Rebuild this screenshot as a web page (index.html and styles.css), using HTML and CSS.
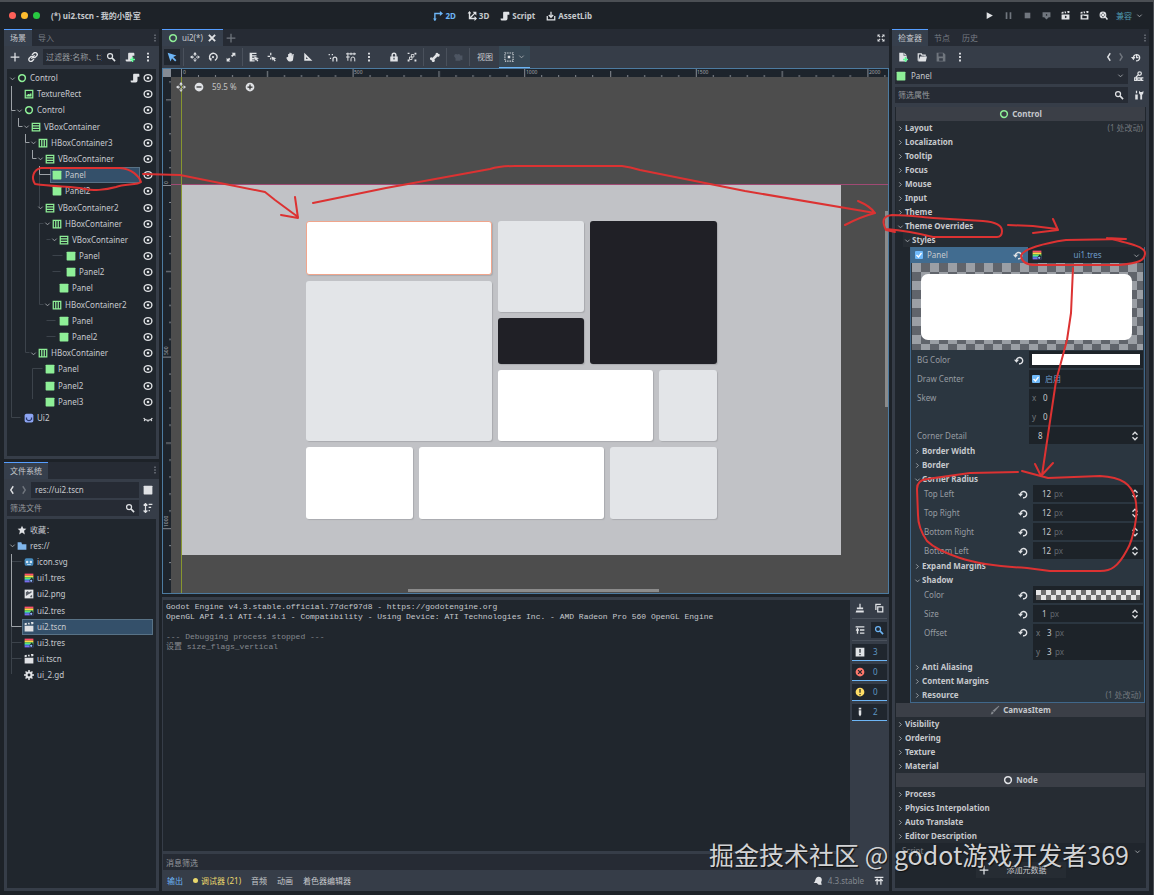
FILE: index.html
```html
<!DOCTYPE html>
<html lang="zh">
<head>
  <meta charset="UTF-8">
  <meta name="viewport" content="width=device-width, initial-scale=1.0">
  <title>(*) ui2.tscn - 我的小卧室</title>
  <link rel="stylesheet" href="styles.css">
</head>
<body>
  <!-- Icon set, 16x16 grid -->
  <svg class="sprite" aria-hidden="true">
    <symbol id="ring" viewBox="0 0 16 16"><circle cx="8" cy="8" r="5.4" fill="none" stroke="currentColor" stroke-width="2.4"/></symbol>
    <symbol id="panel" viewBox="0 0 16 16"><rect x="1" y="1" width="14" height="14" rx="1" fill="currentColor"/></symbol>
    <symbol id="vbox" viewBox="0 0 16 16"><path d="M2 2h12v12H2zM2 6h12M2 10h12" fill="none" stroke="currentColor" stroke-width="2"/></symbol>
    <symbol id="hbox" viewBox="0 0 16 16"><path d="M2 2h12v12H2zM6 2v12M10 2v12" fill="none" stroke="currentColor" stroke-width="2"/></symbol>
    <symbol id="texrect" viewBox="0 0 16 16"><path d="M2 2h12v12H2z" fill="none" stroke="currentColor" stroke-width="2"/><path d="M4 12V9h2V8h2v1l2-2h2v5z" fill="currentColor"/></symbol>
    <symbol id="eye" viewBox="0 0 16 16"><ellipse cx="8" cy="8" rx="6.2" ry="5.4" fill="none" stroke="currentColor" stroke-width="2.2"/><circle cx="8" cy="8" r="2.1" fill="currentColor"/></symbol>
    <symbol id="eye-off" viewBox="0 0 16 16"><path d="M1 8c3 5 11 5 14 0M3 10l-1 3M8 12v2M13 10l1 3" fill="none" stroke="currentColor" stroke-width="1.8"/></symbol>
    <symbol id="script" viewBox="0 0 16 16"><path d="M6 1h8a2 2 0 0 1 1 2v3h-3v6a3 3 0 0 1-3 3H3a2 2 0 0 1-2-2v-1h4V3a2 2 0 0 1 1-2z" fill="currentColor"/></symbol>
    <symbol id="down" viewBox="0 0 16 16"><path d="M3 6l5 5 5-5" fill="none" stroke="currentColor" stroke-width="2"/></symbol>
    <symbol id="right" viewBox="0 0 16 16"><path d="M5 3l5 5-5 5" fill="none" stroke="currentColor" stroke-width="2"/></symbol>
    <symbol id="left" viewBox="0 0 16 16"><path d="M10 2L6 8l4 6" fill="none" stroke="currentColor" stroke-width="2.2"/></symbol>
    <symbol id="next" viewBox="0 0 16 16"><path d="M6 2l4 6-4 6" fill="none" stroke="currentColor" stroke-width="2.2"/></symbol>
    <symbol id="dots" viewBox="0 0 16 16"><path d="M6.5 1h3v3h-3zM6.5 6.5h3v3h-3zM6.5 12h3v3h-3z" fill="currentColor"/></symbol>
    <symbol id="plus" viewBox="0 0 16 16"><path d="M8 1v14M1 8h14" stroke="currentColor" stroke-width="2"/></symbol>
    <symbol id="close" viewBox="0 0 16 16"><path d="M3 3l10 10M13 3L3 13" stroke="currentColor" stroke-width="3"/></symbol>
    <symbol id="link" viewBox="0 0 16 16"><g fill="none" stroke="currentColor" stroke-width="2.2" stroke-linecap="round"><path d="M7 4l2-2a3 3 0 0 1 5 4l-3 3H9M9 12l-2 2a3 3 0 0 1-5-4l3-3h2M6 10l4-4"/></g></symbol>
    <symbol id="search" viewBox="0 0 16 16"><circle cx="6.5" cy="6.5" r="4" fill="none" stroke="currentColor" stroke-width="2"/><path d="M9.5 9.5l5 5" stroke="currentColor" stroke-width="2.6"/></symbol>
    <symbol id="script-add" viewBox="0 0 16 16"><path d="M6 1h8a2 2 0 0 1 1 2v3h-3v6a3 3 0 0 1-3 3H3a2 2 0 0 1-2-2v-1h4V3a2 2 0 0 1 1-2z" fill="currentColor"/><path d="M12 8v8M8 12h8" stroke="#5fff97" stroke-width="2.4"/></symbol>
    <symbol id="select" viewBox="0 0 16 16"><path d="M1 1l4.5 14 2.5-5 5 5 2-2-5-5 5-2.5z" fill="currentColor"/></symbol>
    <symbol id="move" viewBox="0 0 16 16"><path d="M8 0l3 4H5zM8 16l3-4H5zM0 8l4-3v6zM16 8l-4-3v6zM7 3h2v3H7zM7 10h2v3H7zM3 7h3v2H3zM10 7h3v2h-3z" fill="currentColor"/></symbol>
    <symbol id="rotate" viewBox="0 0 16 16"><path d="M4 12a6 6 0 1 1 7 1.5" fill="none" stroke="currentColor" stroke-width="2.2"/><circle cx="8" cy="8" r="1.8" fill="currentColor"/><path d="M1 10l5 0-1 5z" fill="currentColor"/></symbol>
    <symbol id="scale" viewBox="0 0 16 16"><path d="M9 1h6v6l-2-2-3 3-2-2 3-3zM1 9v6h6l-2-2 2-2-2-2-2 2z" fill="currentColor"/></symbol>
    <symbol id="listsel" viewBox="0 0 16 16"><path d="M1 1h11v2H5v2h7v2H5v2h4v3H5v1h4v2H1z" fill="currentColor"/><path d="M8 7l8 3-3 1 2 3-2 1-2-3-1 2z" fill="currentColor"/></symbol>
    <symbol id="pivot" viewBox="0 0 16 16"><path d="M6 1v4M6 9v3M1 7h4" stroke="currentColor" stroke-width="2"/><path d="M7 7l8 3-3 1 2 3-2 1-2-3-1 2z" fill="currentColor"/></symbol>
    <symbol id="hand" viewBox="0 0 16 16"><path d="M5 8V3h2v4V1h2v6V2h2v5l1-4h2l-1 8c0 3-2 4-4 4H7c-2 0-3-2-5-6l2-1z" fill="currentColor"/></symbol>
    <symbol id="ruler" viewBox="0 0 16 16"><path d="M2 1l13 13H2zM5 8v3h3z" fill="currentColor" fill-rule="evenodd"/></symbol>
    <symbol id="snap" viewBox="0 0 16 16"><path d="M8 15v-4a3 3 0 0 1 6 0v4" fill="none" stroke="currentColor" stroke-width="2"/><path d="M1 3h2v2H1zM6 3h2v2H6zM3 9h2v2H3z" fill="currentColor"/></symbol>
    <symbol id="gridsnap" viewBox="0 0 16 16"><path d="M8 15v-4a3 3 0 0 1 6 0v4M3 1v13M8 1v4M13 1v4M0 3h16M0 8h6" fill="none" stroke="currentColor" stroke-width="1.6"/></symbol>
    <symbol id="lock" viewBox="0 0 16 16"><path d="M5 8V5a3 3 0 0 1 6 0v3" fill="none" stroke="currentColor" stroke-width="2.2"/><path d="M2 7h12v8H2zM7 9v3h2V9z" fill="currentColor" fill-rule="evenodd"/></symbol>
    <symbol id="group" viewBox="0 0 16 16"><path d="M1 1h3v2H1zM12 1h3v3h-3zM1 12h3v3H1zM12 12h3v3h-3z" fill="currentColor"/><path d="M7 4h4v4H7zM4 8h4v4H4z" fill="none" stroke="currentColor" stroke-width="1.4"/></symbol>
    <symbol id="bone" viewBox="0 0 16 16"><path d="M11 1a2 2 0 0 1 2 2 2.2 2.2 0 1 1-1 4L7 12a2.4 2.4 0 1 1-4 1 2.4 2.4 0 1 1 1-4l5-5a2.4 2.4 0 0 1 2-3z" fill="currentColor"/></symbol>
    <symbol id="camera" viewBox="0 0 16 16"><path d="M2 7a3 3 0 0 1 5-3 3 3 0 0 1 5 2l3-1v8l-3-1v2H4v-4z" fill="currentColor"/></symbol>
    <symbol id="anchor" viewBox="0 0 16 16"><path d="M1.5 1.5h13v13h-13z" fill="none" stroke="currentColor" stroke-width="1.8" stroke-dasharray="2 1.7"/><path d="M6 6h4v4H6z" fill="currentColor"/></symbol>
    <symbol id="m2d" viewBox="0 0 16 16"><path d="M3 15V4h9" fill="none" stroke="currentColor" stroke-width="2.2"/><path d="M11 0l5 4-5 4zM0 12h6l-3 4z" fill="currentColor"/></symbol>
    <symbol id="m3d" viewBox="0 0 16 16"><path d="M4 2v10h10M4 12l9-9" fill="none" stroke="currentColor" stroke-width="2.2"/><path d="M1 4l3-4 3 4zM12 8l4 4-4 4zM9 1h6v6z" fill="currentColor"/></symbol>
    <symbol id="asset" viewBox="0 0 16 16"><path d="M2 8v6h12V8M8 1v8M4.5 6.5L8 10l3.5-3.5" fill="none" stroke="currentColor" stroke-width="2"/></symbol>
    <symbol id="play" viewBox="0 0 16 16"><path d="M3 2l11 6-11 6z" fill="currentColor"/></symbol>
    <symbol id="pause" viewBox="0 0 16 16"><path d="M3 2h3v12H3zM10 2h3v12h-3z" fill="currentColor"/></symbol>
    <symbol id="stop" viewBox="0 0 16 16"><path d="M3 3h10v10H3z" fill="currentColor"/></symbol>
    <symbol id="remote" viewBox="0 0 16 16"><path d="M1 2h14v9h-3l-4 4-4-4H1zM7 5v4l3-2z" fill="currentColor" fill-rule="evenodd"/></symbol>
    <symbol id="clap" viewBox="0 0 16 16"><path d="M1 6h14v9H1zM7 8v5l4-2.5zM1 2l3-1 1 3-4 1zM6 1h3v3H7zM11 0h4v3l-3 1z" fill="currentColor" fill-rule="evenodd"/></symbol>
    <symbol id="clap-file" viewBox="0 0 16 16"><path d="M1 6h14v9H1zM4 8v5h8V9H8L7 8zM1 2l3-1 1 3-4 1zM6 1h3v3H7zM11 0h4v3l-3 1z" fill="currentColor" fill-rule="evenodd"/></symbol>
    <symbol id="scene" viewBox="0 0 16 16"><path d="M1 6h14v9H1zM1 2l3-1 1 3-4 1zM6 1h3v3H7zM11 0h4v3l-3 1z" fill="currentColor"/></symbol>
    <symbol id="movie" viewBox="0 0 16 16"><circle cx="7" cy="7" r="6" fill="currentColor"/><path d="M7 3v2M3 7h2M9 7h2M7 9v2" stroke="#1d2228" stroke-width="2"/><path d="M10 9l5 6" stroke="currentColor" stroke-width="2.5"/></symbol>
    <symbol id="expand" viewBox="0 0 16 16"><path d="M1 1h5L4.5 3 7 5.500 5.500 7 3 4.500 1 6zM15 1v5l-2-1.500L10.500 7 9 5.500 11.500 3 10 1zM1 15v-5l2 1.500L5.500 9 7 10.500 4.500 13 6 15zM15 15h-5l1.500-2L9 10.500 10.500 9l2.500 2.500 2-1.500z" fill="currentColor"/></symbol>
    <symbol id="newfile" viewBox="0 0 16 16"><path d="M2 1h7v5h5v9H2zM10 1l4 4h-4z" fill="currentColor"/><path d="M12 8v8M8 12h8" stroke="#5fff97" stroke-width="2.2"/></symbol>
    <symbol id="open" viewBox="0 0 16 16"><path d="M2 14V3h5l1 2h5v2" fill="none" stroke="currentColor" stroke-width="2"/><path d="M5 7h11l-2 8H2z" fill="currentColor"/></symbol>
    <symbol id="save" viewBox="0 0 16 16"><path d="M1 1h11l3 3v11H1zM4 2v5h7V2zM5 10v4h6v-4z" fill="currentColor" fill-rule="evenodd"/></symbol>
    <symbol id="history" viewBox="0 0 16 16"><path d="M4 10a5 5 0 1 1 4 4M9 5v4h3" fill="none" stroke="currentColor" stroke-width="2"/><path d="M0 8h7l-3 5z" fill="currentColor"/></symbol>
    <symbol id="doc" viewBox="0 0 16 16"><circle cx="9" cy="4" r="2.8" fill="none" stroke="currentColor" stroke-width="2"/><path d="M7 6L3 10M1 11h3v4H1zM6 11h4v4H6zM15 11h-3v4h3" fill="none" stroke="currentColor" stroke-width="1.8"/></symbol>
    <symbol id="tools" viewBox="0 0 16 16"><path d="M2 7h4v8H2zM3 1h2v4H3zM8 1l2 2h3l2-2v4l-2 3v7h-3V8L8 5z" fill="currentColor"/></symbol>
    <symbol id="revert" viewBox="0 0 16 16"><path d="M4 10a5 5 0 1 1 4 4" fill="none" stroke="currentColor" stroke-width="2.2"/><path d="M0 7.5h8l-4 5z" fill="currentColor"/></symbol>
    <symbol id="updown" viewBox="0 0 16 16"><path d="M4 6l4-4 4 4M4 10l4 4 4-4" fill="none" stroke="currentColor" stroke-width="2"/></symbol>
    <symbol id="style" viewBox="0 0 16 16"><path d="M1 1h14v3H1z" fill="#ff4f6a"/><path d="M1 4h14v3H1z" fill="#ffd84a"/><path d="M1 7h14v3H1z" fill="#5fe86e"/><path d="M1 10h14v2H1z" fill="#45c8f5"/><path d="M1 12h14v3H1z" fill="#7a6cf0"/><path d="M12 7l3 3v5H9v-4z" fill="#20262d"/><circle cx="11.500" cy="12.500" r="1.800" fill="#8db8ff"/></symbol>
    <symbol id="star" viewBox="0 0 16 16"><path d="M8 1l2 4.500 5 .5-3.700 3.300L12.500 15 8 12l-4.500 3 1.200-5.700L1 6l5-.5z" fill="currentColor"/></symbol>
    <symbol id="folder" viewBox="0 0 16 16"><path d="M1 2h6l1 3h7v9H1z" fill="#7fb5ea"/></symbol>
    <symbol id="godot" viewBox="0 0 16 16"><rect x="1" y="2" width="14" height="12" rx="3" fill="#478cbf"/><circle cx="5" cy="8" r="2" fill="#d8e6f2"/><circle cx="11" cy="8" r="2" fill="#d8e6f2"/><path d="M5 12h6" stroke="#fff"/></symbol>
    <symbol id="node2d" viewBox="0 0 16 16"><rect x="1" y="1" width="14" height="14" rx="3" fill="#8da5f3"/><path d="M4 7v3c2 3 6 3 8 0V7" fill="none" stroke="#28386e" stroke-width="2"/></symbol>
    <symbol id="image" viewBox="0 0 16 16"><path d="M1 1h14v14H1z" fill="#e4e6e9"/><path d="M3 5l3-2 2 2 4-2v3l-4 2-5 3zM10 11l3-2v4h-3z" fill="#5a5f68"/></symbol>
    <symbol id="gear" viewBox="0 0 16 16"><circle cx="8" cy="8" r="4" fill="none" stroke="currentColor" stroke-width="3.4"/><path d="M8 0v4M8 12v4M0 8h4M12 8h4M2.500 2.500l3 3M10.500 10.500l3 3M13.500 2.500l-3 3M5.500 10.500l-3 3" stroke="currentColor" stroke-width="2.4"/></symbol>
    <symbol id="sort" viewBox="0 0 16 16"><path d="M4 2v12M1 4l3-3 3 3M1 12l3 3 3-3M9 2h6M9 7h4M9 12h2" fill="none" stroke="currentColor" stroke-width="2"/></symbol>
    <symbol id="brush" viewBox="0 0 16 16"><path d="M14 1l1 1-8 9-3-2zM3 10l3 2c-1 3-3 3-5 3z" fill="currentColor"/></symbol>
    <symbol id="clear" viewBox="0 0 16 16"><path d="M7 1h2v6h4v3H3V7h4zM2 12h12v3H1z" fill="currentColor"/></symbol>
    <symbol id="copy" viewBox="0 0 16 16"><path d="M6 6h8v8H6zM3 11V2h8" fill="none" stroke="currentColor" stroke-width="2"/></symbol>
    <symbol id="collapse" viewBox="0 0 16 16"><path d="M1 3h14M8 8h7M8 13h7M4 6v8M2 9l2-3 2 3" fill="none" stroke="currentColor" stroke-width="2.2"/></symbol>
    <symbol id="msg" viewBox="0 0 16 16"><path d="M1 1h14v14H1zM7 3v6h2V3zM7 11v2h2v-2z" fill="currentColor" fill-rule="evenodd"/></symbol>
    <symbol id="err" viewBox="0 0 16 16"><circle cx="8" cy="8" r="7" fill="#ff786b"/><path d="M5 5l6 6M11 5l-6 6" stroke="#20262d" stroke-width="2"/></symbol>
    <symbol id="warn" viewBox="0 0 16 16"><circle cx="8" cy="8" r="7" fill="#ffdd65"/><path d="M8 3v6M8 11v2" stroke="#20262d" stroke-width="2"/></symbol>
    <symbol id="info" viewBox="0 0 16 16"><path d="M6 1h4v3H6zM6 5h4v7l-2 3-2-3z" fill="currentColor"/></symbol>
    <symbol id="bell" viewBox="0 0 16 16"><path d="M5 3c4-4 10-1 9 4l-1 3 1 4H9l-3-3H1c3-2 2-5 4-8z" fill="currentColor"/></symbol>
    <symbol id="pin" viewBox="0 0 16 16"><path d="M1 2h14M5 14V6M11 14V6M2 8l3-3 3 3M8 8l3-3 3 3" fill="none" stroke="currentColor" stroke-width="2"/></symbol>
    <symbol id="minus-c" viewBox="0 0 16 16"><circle cx="8" cy="8" r="7" fill="currentColor"/><path d="M4 8h8" stroke="#333" stroke-width="2"/></symbol>
    <symbol id="plus-c" viewBox="0 0 16 16"><circle cx="8" cy="8" r="7" fill="currentColor"/><path d="M4 8h8M8 4v8" stroke="#333" stroke-width="2"/></symbol>
  </svg>

  <header class="titlebar">
    <div class="title">
      <span class="light red"></span><span class="light yellow"></span><span class="light green"></span>
      <strong>(*) ui2.tscn - 我的小卧室</strong>
    </div>
    <nav class="modes">
      <button class="mode on"><svg class="i"><use href="#m2d"/></svg>2D</button>
      <button class="mode"><svg class="i"><use href="#m3d"/></svg>3D</button>
      <button class="mode"><svg class="i"><use href="#script"/></svg>Script</button>
      <button class="mode"><svg class="i"><use href="#asset"/></svg>AssetLib</button>
    </nav>
    <div class="run">
      <button class="tool" aria-label="运行"><svg class="i"><use href="#play"/></svg></button>
      <button class="tool dim" aria-label="暂停"><svg class="i"><use href="#pause"/></svg></button>
      <button class="tool dim" aria-label="停止"><svg class="i"><use href="#stop"/></svg></button>
      <button class="tool dim" aria-label="远程调试"><svg class="i"><use href="#remote"/></svg></button>
      <button class="tool" aria-label="运行当前场景"><svg class="i"><use href="#clap"/></svg></button>
      <button class="tool" aria-label="运行指定场景"><svg class="i"><use href="#clap-file"/></svg></button>
      <button class="tool" aria-label="录制"><svg class="i"><use href="#movie"/></svg></button>
      <button class="renderer">兼容<svg class="arrow"><use href="#down"/></svg></button>
    </div>
  </header>

  <main class="editor">
    <!-- Left docks -->
    <div class="side">
      <section class="dock">
        <div class="tabs">
          <button class="tab on">场景</button><button class="tab">导入</button>
          <button class="more dim" aria-label="更多"><svg class="i"><use href="#dots"/></svg></button>
        </div>
        <div class="bar scene-bar">
          <button class="tool" aria-label="添加节点"><svg class="i"><use href="#plus"/></svg></button>
          <button class="tool" aria-label="实例化"><svg class="i"><use href="#link"/></svg></button>
          <label class="filter"><input type="text" placeholder="过滤器:名称、t:类型" aria-label="过滤器"><svg class="i"><use href="#search"/></svg></label>
          <button class="tool" aria-label="添加脚本"><svg class="i"><use href="#script-add"/></svg></button>
          <button class="tool" aria-label="更多选项"><svg class="i"><use href="#dots"/></svg></button>
        </div>
        <div class="well nodes-well">
          <ul class="tree nodes">
            <li class="d0"><svg class="arrow"><use href="#down"/></svg><svg class="i g"><use href="#ring"/></svg><span>Control</span><svg class="i"><use href="#script"/></svg><svg class="i eye"><use href="#eye"/></svg></li>
            <li class="d1 leaf"><svg class="i g"><use href="#texrect"/></svg><span>TextureRect</span><svg class="i eye"><use href="#eye"/></svg></li>
            <li class="d1"><svg class="arrow"><use href="#down"/></svg><svg class="i g"><use href="#ring"/></svg><span>Control</span><svg class="i eye"><use href="#eye"/></svg></li>
            <li class="d2"><svg class="arrow"><use href="#down"/></svg><svg class="i g"><use href="#vbox"/></svg><span>VBoxContainer</span><svg class="i eye"><use href="#eye"/></svg></li>
            <li class="d3"><svg class="arrow"><use href="#down"/></svg><svg class="i g"><use href="#hbox"/></svg><span>HBoxContainer3</span><svg class="i eye"><use href="#eye"/></svg></li>
            <li class="d4"><svg class="arrow"><use href="#down"/></svg><svg class="i g"><use href="#vbox"/></svg><span>VBoxContainer</span><svg class="i eye"><use href="#eye"/></svg></li>
            <li class="d5 leaf"><div class="picked"><svg class="i g"><use href="#panel"/></svg><span>Panel</span></div><svg class="i eye"><use href="#eye"/></svg></li>
            <li class="d5 leaf"><svg class="i g"><use href="#panel"/></svg><span>Panel2</span><svg class="i eye"><use href="#eye"/></svg></li>
            <li class="d4"><svg class="arrow"><use href="#down"/></svg><svg class="i g"><use href="#vbox"/></svg><span>VBoxContainer2</span><svg class="i eye"><use href="#eye"/></svg></li>
            <li class="d5"><svg class="arrow"><use href="#down"/></svg><svg class="i g"><use href="#hbox"/></svg><span>HBoxContainer</span><svg class="i eye"><use href="#eye"/></svg></li>
            <li class="d6"><svg class="arrow"><use href="#down"/></svg><svg class="i g"><use href="#vbox"/></svg><span>VBoxContainer</span><svg class="i eye"><use href="#eye"/></svg></li>
            <li class="d7 leaf"><svg class="i g"><use href="#panel"/></svg><span>Panel</span><svg class="i eye"><use href="#eye"/></svg></li>
            <li class="d7 leaf"><svg class="i g"><use href="#panel"/></svg><span>Panel2</span><svg class="i eye"><use href="#eye"/></svg></li>
            <li class="d6 leaf"><svg class="i g"><use href="#panel"/></svg><span>Panel</span><svg class="i eye"><use href="#eye"/></svg></li>
            <li class="d5"><svg class="arrow"><use href="#down"/></svg><svg class="i g"><use href="#hbox"/></svg><span>HBoxContainer2</span><svg class="i eye"><use href="#eye"/></svg></li>
            <li class="d6 leaf"><svg class="i g"><use href="#panel"/></svg><span>Panel</span><svg class="i eye"><use href="#eye"/></svg></li>
            <li class="d6 leaf"><svg class="i g"><use href="#panel"/></svg><span>Panel2</span><svg class="i eye"><use href="#eye"/></svg></li>
            <li class="d3"><svg class="arrow"><use href="#down"/></svg><svg class="i g"><use href="#hbox"/></svg><span>HBoxContainer</span><svg class="i eye"><use href="#eye"/></svg></li>
            <li class="d4 leaf"><svg class="i g"><use href="#panel"/></svg><span>Panel</span><svg class="i eye"><use href="#eye"/></svg></li>
            <li class="d4 leaf"><svg class="i g"><use href="#panel"/></svg><span>Panel2</span><svg class="i eye"><use href="#eye"/></svg></li>
            <li class="d4 leaf"><svg class="i g"><use href="#panel"/></svg><span>Panel3</span><svg class="i eye"><use href="#eye"/></svg></li>
            <li class="d1 leaf"><svg class="i"><use href="#node2d"/></svg><span>Ui2</span><svg class="i eye"><use href="#eye-off"/></svg></li>
          </ul>
          <!-- Relationship lines -->
          <svg class="guides">
            <path class="faint" d="M4.500 41v307.500h9M18.500 73v210.500h4M32.500 105v33M32.500 154.500h4M32.500 154v81.500h4M39.500 170.500h4M45.500 186.500h10M45.500 202.500h8M39.500 251.500h9M39.500 267.500h9M25.500 330v-30.500h10"/>
            <path d="M4.500 17v24.500h4M11.500 49v8.500h4M18.500 65v8.500h4M25.500 81v8.500h4M32.500 97v8.500h11"/>
          </svg>
        </div>
      </section>

      <section class="dock">
        <div class="tabs">
          <button class="tab on">文件系统</button>
          <button class="more dim" aria-label="更多"><svg class="i"><use href="#dots"/></svg></button>
        </div>
        <div class="bar path-bar">
          <button class="nav" aria-label="后退"><svg class="i"><use href="#left"/></svg></button>
          <button class="nav dim" aria-label="前进"><svg class="i"><use href="#next"/></svg></button>
          <label class="filter path"><input type="text" value="res://ui2.tscn" aria-label="路径"></label>
          <button class="tool" aria-label="切换布局"><svg class="i"><use href="#panel"/></svg></button>
        </div>
        <div class="bar file-bar">
          <label class="filter"><input type="text" placeholder="筛选文件" aria-label="筛选文件"><svg class="i"><use href="#search"/></svg></label>
          <button class="tool" aria-label="排序"><svg class="i"><use href="#sort"/></svg></button>
        </div>
        <div class="well files-well">
          <ul class="tree files">
            <li class="d0 leaf"><svg class="i"><use href="#star"/></svg><span>收藏：</span></li>
            <li class="d0"><svg class="arrow"><use href="#down"/></svg><svg class="i"><use href="#folder"/></svg><span>res://</span></li>
            <li class="d1 leaf"><svg class="i"><use href="#godot"/></svg><span>icon.svg</span></li>
            <li class="d1 leaf"><svg class="i"><use href="#style"/></svg><span>ui1.tres</span></li>
            <li class="d1 leaf"><svg class="i"><use href="#image"/></svg><span>ui2.png</span></li>
            <li class="d1 leaf"><svg class="i"><use href="#style"/></svg><span>ui2.tres</span></li>
            <li class="d1 leaf"><div class="picked"><svg class="i"><use href="#scene"/></svg><span>ui2.tscn</span></div></li>
            <li class="d1 leaf"><svg class="i"><use href="#style"/></svg><span>ui3.tres</span></li>
            <li class="d1 leaf"><svg class="i"><use href="#scene"/></svg><span>ui.tscn</span></li>
            <li class="d1 leaf"><svg class="i"><use href="#gear"/></svg><span>ui_2.gd</span></li>
          </ul>
          <svg class="guides">
            <path class="faint" d="M4.500 42.500h10M4.500 123.500h10M4.500 139.500h10M4.500 107v48"/>
            <path d="M4.500 35v72.500h10"/>
          </svg>
        </div>
      </section>
    </div>

    <!-- Canvas and output -->
    <div class="center">
      <div class="tabs">
        <button class="tab on scene-tab"><svg class="i g"><use href="#ring"/></svg>ui2(*)<svg class="i"><use href="#close"/></svg></button>
        <button class="tool dim" aria-label="新建场景"><svg class="i"><use href="#plus"/></svg></button>
        <button class="tool more" aria-label="专注模式"><svg class="i"><use href="#expand"/></svg></button>
      </div>
      <div class="toolbar">
        <button class="tool on" aria-label="选择"><svg class="i"><use href="#select"/></svg></button>
        <i class="sep"></i>
        <button class="tool" aria-label="移动"><svg class="i"><use href="#move"/></svg></button>
        <button class="tool" aria-label="旋转"><svg class="i"><use href="#rotate"/></svg></button>
        <button class="tool" aria-label="缩放"><svg class="i"><use href="#scale"/></svg></button>
        <i class="sep"></i>
        <button class="tool" aria-label="列表选择"><svg class="i"><use href="#listsel"/></svg></button>
        <button class="tool" aria-label="轴心"><svg class="i"><use href="#pivot"/></svg></button>
        <button class="tool" aria-label="平移"><svg class="i"><use href="#hand"/></svg></button>
        <button class="tool" aria-label="标尺"><svg class="i"><use href="#ruler"/></svg></button>
        <button class="tool apart" aria-label="智能吸附"><svg class="i"><use href="#snap"/></svg></button>
        <button class="tool" aria-label="栅格吸附"><svg class="i"><use href="#gridsnap"/></svg></button>
        <button class="tool" aria-label="吸附选项"><svg class="i"><use href="#dots"/></svg></button>
        <button class="tool apart" aria-label="锁定"><svg class="i"><use href="#lock"/></svg></button>
        <button class="tool" aria-label="编组"><svg class="i"><use href="#group"/></svg></button>
        <i class="sep"></i>
        <button class="tool" aria-label="骨骼"><svg class="i"><use href="#bone"/></svg></button>
        <i class="sep"></i>
        <button class="tool off" aria-label="摄像机"><svg class="i"><use href="#camera"/></svg></button>
        <i class="sep"></i>
        <button class="view">视图</button>
        <button class="anchors" aria-label="锚点"><svg class="i"><use href="#anchor"/></svg><svg class="arrow"><use href="#down"/></svg></button>
      </div>

      <div class="viewport">
        <div class="corner"></div>
        <svg class="ruler">
          <defs><pattern id="hticks" x="10" width="171.600" height="8" patternUnits="userSpaceOnUse">
            <path d="M.5 0v8M17.500 6v2M34.500 6v2M51.500 6v2M68.500 6v2M86.500 2v6M103.500 6v2M120.500 6v2M137.500 6v2M154.500 6v2" stroke="#868b92"/>
          </pattern></defs>
          <rect width="100%" height="8" fill="url(#hticks)"/>
          <text x="12" y="5">0</text><text x="183" y="5">500</text><text x="355" y="5">1000</text><text x="526" y="5">1500</text><text x="698" y="5">2000</text>
        </svg>
        <svg class="ruler">
          <defs><pattern id="vticks" y="108" width="8" height="171.600" patternUnits="userSpaceOnUse">
            <path d="M0 .5h8M6 17.500h2M6 34.500h2M6 51.500h2M6 68.500h2M3 86.500h5M6 103.500h2M6 120.500h2M6 137.500h2M6 154.500h2" stroke="#868b92"/>
          </pattern></defs>
          <rect width="8" height="100%" fill="url(#vticks)"/>
          <text transform="translate(5 107) rotate(-90)">0</text><text transform="translate(5 278) rotate(-90)">500</text><text transform="translate(5 450) rotate(-90)">1000</text>
        </svg>
        <div class="canvas">
          <div class="stage">
            <div class="row top">
              <div class="col wide">
                <div class="box white short selected"></div>
                <div class="box grow"></div>
              </div>
              <div class="col grow">
                <div class="row upper">
                  <div class="col narrow">
                    <div class="box double"></div>
                    <div class="box dark grow"></div>
                  </div>
                  <div class="box dark grow"></div>
                </div>
                <div class="row grow">
                  <div class="box white grow"></div>
                  <div class="box small"></div>
                </div>
              </div>
            </div>
            <div class="row bottom">
              <div class="box white third"></div>
              <div class="box white grow"></div>
              <div class="box third"></div>
            </div>
          </div>
          <i class="axis-x"></i><i class="axis-y"></i>
          <i class="scroll-x"></i><i class="scroll-y"></i>
          <div class="zoom">
            <button aria-label="居中"><svg class="i"><use href="#move"/></svg></button>
            <button aria-label="缩小"><svg class="i"><use href="#minus-c"/></svg></button>
            <span>59.5 %</span>
            <button aria-label="放大"><svg class="i"><use href="#plus-c"/></svg></button>
          </div>
        </div>
      </div>

      <section class="output">
        <div class="log-area">
          <div class="log-col">
            <pre class="log">Godot Engine v4.3.stable.official.77dcf97d8 - https://godotengine.org
OpenGL API 4.1 ATI-4.14.1 - Compatibility - Using Device: ATI Technologies Inc. - AMD Radeon Pro 560 OpenGL Engine

<span>--- Debugging process stopped ---
设置 size_flags_vertical</span></pre>
            <input class="log-filter" type="text" placeholder="消息筛选" aria-label="消息筛选">
          </div>
          <div class="log-tools">
            <div class="pair">
              <button class="tool" aria-label="清除"><svg class="i"><use href="#clear"/></svg></button>
              <button class="tool" aria-label="复制"><svg class="i"><use href="#copy"/></svg></button>
            </div>
            <div class="pair">
              <button class="tool" aria-label="折叠"><svg class="i"><use href="#collapse"/></svg></button>
              <button class="tool on" aria-label="搜索"><svg class="i"><use href="#search"/></svg></button>
            </div>
            <button class="count"><svg class="i"><use href="#msg"/></svg>3</button>
            <button class="count"><svg class="i"><use href="#err"/></svg>0</button>
            <button class="count"><svg class="i"><use href="#warn"/></svg>0</button>
            <button class="count"><svg class="i"><use href="#info"/></svg>2</button>
          </div>
        </div>
        <footer class="bottom-tabs">
          <button class="on">输出</button>
          <button class="alert"><i class="dot"></i>调试器 (21)</button>
          <button>音频</button>
          <button>动画</button>
          <button>着色器编辑器</button>
          <span class="version"><svg class="i"><use href="#bell"/></svg>4.3.stable</span>
          <button aria-label="固定"><svg class="i"><use href="#pin"/></svg></button>
        </footer>
      </section>
    </div>

    <!-- Inspector -->
    <section class="dock inspector">
      <div class="tabs">
        <button class="tab on">检查器</button><button class="tab">节点</button><button class="tab">历史</button>
        <button class="more dim" aria-label="更多"><svg class="i"><use href="#dots"/></svg></button>
      </div>
      <div class="bar res-bar">
        <button class="tool" aria-label="新建资源"><svg class="i"><use href="#newfile"/></svg></button>
        <button class="tool" aria-label="打开资源"><svg class="i"><use href="#open"/></svg></button>
        <button class="tool dim" aria-label="保存资源"><svg class="i"><use href="#save"/></svg></button>
        <button class="tool" aria-label="更多选项"><svg class="i"><use href="#dots"/></svg></button>
        <button class="nav push" aria-label="上一个"><svg class="i"><use href="#left"/></svg></button>
        <button class="nav dim" aria-label="下一个"><svg class="i"><use href="#next"/></svg></button>
        <button class="tool" aria-label="历史记录"><svg class="i"><use href="#history"/></svg></button>
      </div>
      <div class="bar">
        <button class="filter object"><svg class="i g"><use href="#panel"/></svg><span>Panel</span><svg class="arrow"><use href="#down"/></svg></button>
        <button class="tool" aria-label="文档"><svg class="i"><use href="#doc"/></svg></button>
      </div>
      <div class="bar">
        <label class="filter"><input type="text" placeholder="筛选属性" aria-label="筛选属性"><svg class="i"><use href="#search"/></svg></label>
        <button class="tool" aria-label="属性设置"><svg class="i"><use href="#tools"/></svg></button>
      </div>

      <div class="props">
        <h2 class="class-name"><svg class="i g"><use href="#ring"/></svg>Control</h2>
        <button class="group"><svg class="arrow"><use href="#right"/></svg>Layout<small>(1 处改动)</small></button>
        <button class="group"><svg class="arrow"><use href="#right"/></svg>Localization</button>
        <button class="group"><svg class="arrow"><use href="#right"/></svg>Tooltip</button>
        <button class="group"><svg class="arrow"><use href="#right"/></svg>Focus</button>
        <button class="group"><svg class="arrow"><use href="#right"/></svg>Mouse</button>
        <button class="group"><svg class="arrow"><use href="#right"/></svg>Input</button>
        <button class="group"><svg class="arrow"><use href="#right"/></svg>Theme</button>
        <button class="group"><svg class="arrow"><use href="#down"/></svg>Theme Overrides</button>
        <div class="styles">
          <button class="group"><svg class="arrow"><use href="#down"/></svg>Styles</button>
          <div class="resource">
            <div class="res-head">
              <label class="res-name"><input type="checkbox" checked>Panel</label>
              <svg class="i"><use href="#revert"/></svg>
              <button class="res-value"><svg class="i"><use href="#style"/></svg><span>ui1.tres</span><svg class="arrow"><use href="#down"/></svg></button>
            </div>
            <div class="preview"><div class="preview-box"></div></div>
            <div class="fields">
              <div class="prop"><label for="bg">BG Color</label><svg class="i"><use href="#revert"/></svg><button class="value swatch" id="bg"><i></i></button></div>
              <div class="prop"><label for="center">Draw Center</label><div class="value"><input type="checkbox" id="center" checked><label class="enabled" for="center">启用</label></div></div>
              <div class="prop tall"><label for="skx">Skew</label>
                <div class="vector">
                  <div class="value"><label class="axis" for="skx">x</label><input id="skx" type="text" value="0"></div>
                  <div class="value"><label class="axis" for="sky">y</label><input id="sky" type="text" value="0"></div>
                </div>
              </div>
              <div class="prop"><label for="detail">Corner Detail</label><div class="value num"><input id="detail" type="text" value="8"><svg class="i"><use href="#updown"/></svg></div></div>
            </div>
            <button class="group"><svg class="arrow"><use href="#right"/></svg>Border Width</button>
            <button class="group"><svg class="arrow"><use href="#right"/></svg>Border</button>
            <button class="group"><svg class="arrow"><use href="#down"/></svg>Corner Radius</button>
            <div class="fields nested">
              <div class="prop"><label for="tl">Top Left</label><svg class="i"><use href="#revert"/></svg><div class="value num"><input id="tl" type="text" value="12"><span>px</span><svg class="i"><use href="#updown"/></svg></div></div>
              <div class="prop"><label for="tr">Top Right</label><svg class="i"><use href="#revert"/></svg><div class="value num"><input id="tr" type="text" value="12"><span>px</span><svg class="i"><use href="#updown"/></svg></div></div>
              <div class="prop"><label for="br">Bottom Right</label><svg class="i"><use href="#revert"/></svg><div class="value num"><input id="br" type="text" value="12"><span>px</span><svg class="i"><use href="#updown"/></svg></div></div>
              <div class="prop"><label for="bl">Bottom Left</label><svg class="i"><use href="#revert"/></svg><div class="value num"><input id="bl" type="text" value="12"><span>px</span><svg class="i"><use href="#updown"/></svg></div></div>
            </div>
            <button class="group"><svg class="arrow"><use href="#right"/></svg>Expand Margins</button>
            <button class="group"><svg class="arrow"><use href="#down"/></svg>Shadow</button>
            <div class="fields nested">
              <div class="prop"><label for="shc">Color</label><svg class="i"><use href="#revert"/></svg><button class="value swatch checker" id="shc"><i></i></button></div>
              <div class="prop"><label for="shs">Size</label><svg class="i"><use href="#revert"/></svg><div class="value num"><input class="digit" id="shs" type="text" value="1"><span>px</span><svg class="i"><use href="#updown"/></svg></div></div>
              <div class="prop tall"><label for="ofx">Offset</label><svg class="i"><use href="#revert"/></svg>
                <div class="vector">
                  <div class="value"><label class="axis" for="ofx">x</label><input class="digit" id="ofx" type="text" value="3"><span>px</span></div>
                  <div class="value"><label class="axis" for="ofy">y</label><input class="digit" id="ofy" type="text" value="3"><span>px</span></div>
                </div>
              </div>
            </div>
            <button class="group"><svg class="arrow"><use href="#right"/></svg>Anti Aliasing</button>
            <button class="group"><svg class="arrow"><use href="#right"/></svg>Content Margins</button>
            <button class="group"><svg class="arrow"><use href="#right"/></svg>Resource<small>(1 处改动)</small></button>
          </div>
        </div>
        <h2 class="class-name"><svg class="i brush"><use href="#brush"/></svg>CanvasItem</h2>
        <button class="group"><svg class="arrow"><use href="#right"/></svg>Visibility</button>
        <button class="group"><svg class="arrow"><use href="#right"/></svg>Ordering</button>
        <button class="group"><svg class="arrow"><use href="#right"/></svg>Texture</button>
        <button class="group"><svg class="arrow"><use href="#right"/></svg>Material</button>
        <h2 class="class-name"><svg class="i"><use href="#ring"/></svg>Node</h2>
        <button class="group"><svg class="arrow"><use href="#right"/></svg>Process</button>
        <button class="group"><svg class="arrow"><use href="#right"/></svg>Physics Interpolation</button>
        <button class="group"><svg class="arrow"><use href="#right"/></svg>Auto Translate</button>
        <button class="group"><svg class="arrow"><use href="#right"/></svg>Editor Description</button>
        <div class="script-row"><span>Script</span><svg class="arrow"><use href="#down"/></svg></div>
        <button class="add-meta"><svg class="i"><use href="#plus"/></svg>添加元数据</button>
      </div>
    </section>
  </main>

  <!-- Hand-drawn notes -->
  <svg class="notes" viewBox="0 0 1154 895" preserveAspectRatio="xMinYMin">
    <path d="M35 184C31 178 33 170 41 168L120 168C132 169 139 176 141 182C138 185 125 184 116 187C105 190 92 191 85 189C75 186 55 187 35 184"/>
    <path d="M143 174L180 175L265 192L275 200L298 217M295 197L298 218L281 215"/>
    <path d="M313 203L386 188L490 169Q500 166 515 166L622 166Q630 167 640 170L745 191L875 213M858 201Q870 206 875 213Q860 217 845 225"/>
    <path d="M895 232L886 230C882 222 882 216 892 215C908 215 920 217 933 218L983 221C996 222 1002 226 1002 231Q1002 237 997 237L933 237Q910 231 886 229"/>
    <path d="M1008 225L1033 226L1057 229M1053 219L1058 230L1033 233"/>
    <path d="M1107 238L1126 239L1066 240C1045 243 1022 249 1021 256C1022 263 1028 265 1036 265L1120 265C1138 263 1145 261 1145 253C1145 247 1132 244 1107 238"/>
    <path d="M1073 268L1071 313L1067 340L1056 381L1042 475M1035 464L1041 476L1053 463"/>
    <path d="M1022 471L1048 478L1100 476C1123 477 1131 485 1135 497Q1138 510 1135 525Q1132 542 1127 550Q1120 563 1114 567Q1109 571 1100 571L1050 571L1027 568Q985 566 960 558Q936 550 927 541Q918 528 918 515L917 489Q917 480 927 479L970 473L1018 472"/>
  </svg>
  <div class="watermark">掘金技术社区 @ godot游戏开发者369</div>
</body>
</html>
```

FILE: styles.css
```css
* {
  box-sizing: border-box;
}

body {
  margin: 0;
  min-height: 100vh;
  display: flex;
  flex-direction: column;
  position: relative;
  padding: 0 4px 4px;
  background-color: #1d2228;
  border-top: 2px solid #4b4f54;
  border-right: 1px solid #4b4f54;
  color: #c6c9cd;
  font-family: "Noto Sans", "Noto Sans CJK SC", sans-serif;
  font-size: 8px;
  line-height: 12px;
}

button, input {
  font: inherit;
  color: inherit;
  background: none;
  border: 0;
  padding: 0;
  margin: 0;
  min-width: 0;
}

button {
  display: flex;
  align-items: center;
  cursor: pointer;
  white-space: nowrap;
}

ul, h2, pre {
  margin: 0;
  padding: 0;
  list-style: none;
}

/* Icons */
.sprite {
  position: absolute;
  width: 0;
  height: 0;
}

.i {
  width: 10px;
  height: 10px;
  flex: none;
  color: #e0e2e5;
}

.arrow {
  width: 7px;
  height: 7px;
  flex: none;
  color: #a5a9ae;
}

.i.g {
  color: #8eef97;
}

.dim .i {
  color: #70767e;
}

.tool.off .i {
  color: #4d5562;
}

.tool {
  width: 16px;
  height: 16px;
  justify-content: center;
  flex: none;
}

.tool.on {
  background-color: #20262e;
}

.tool.on .i {
  color: #6db5f5;
}

/* Title bar */
.titlebar {
  display: grid;
  grid-template-columns: 3fr 5fr;
  grid-template-rows: 27px;
  align-items: center;
  position: relative;
}

.title {
  display: flex;
  align-items: center;
  gap: 5px;
  padding-left: 5px;
}

.title strong {
  margin-left: 6px;
}

.light {
  width: 7px;
  height: 7px;
  border-radius: 50%;
}

.light.red { background-color: #ff6159; }
.light.yellow { background-color: #ffbd2e; }
.light.green { background-color: #28c941; }

.modes {
  display: flex;
  gap: 11px;
}

.mode {
  gap: 2px;
  font-weight: bold;
}

.mode.on, .mode.on .i {
  color: #6db5f5;
}

.run {
  position: absolute;
  right: 6px;
  display: flex;
  gap: 3px;
}

.run .i {
  width: 9px;
  height: 9px;
}

.renderer {
  color: #4f9bb0;
  gap: 4px;
  margin-left: 2px;
}

/* Main areas */
.editor {
  flex: 1;
  display: grid;
  grid-template-columns: 155px minmax(0, 1fr) 257px;
  gap: 3px;
}

.side {
  display: flex;
  flex-direction: column;
  gap: 3px;
}

.dock {
  flex: 1;
  display: flex;
  flex-direction: column;
  background-color: #363d48;
  padding: 0 3px 3px;
}

.tabs {
  display: flex;
  height: 17px;
  background-color: #262b34;
}

.dock > .tabs {
  margin: 0 -3px;
}

.tab {
  padding: 0 6px;
  color: #777c84;
  border-top: 1px solid transparent;
}

.tab.on {
  background-color: #363f4c;
  border-top-color: #569eff;
  color: #c6c9cd;
}

.more {
  margin-left: auto;
}

.more .i {
  width: 8px;
}

.bar {
  display: flex;
  align-items: center;
  gap: 1px;
  height: 19px;
}

.scene-bar {
  height: 22px;
  gap: 2px;
}

.res-bar {
  height: 20px;
  padding-top: 1px;
}

.filter {
  flex: 1;
  min-width: 0;
  height: 16px;
  display: flex;
  align-items: center;
  gap: 4px;
  padding: 0 4px 0 3px;
  background-color: #262b34;
}

.filter input {
  flex: 1;
  width: 10px;
}

.filter input::placeholder, .log-filter::placeholder {
  color: #969a9f;
}

.filter.path {
  padding-left: 4px;
}

.path-bar {
  padding-top: 2px;
  height: 20px;
}

.nav {
  width: 11px;
}

.well {
  flex: 1;
  position: relative;
  margin-top: 1px;
  background-color: #20262d;
}

/* Trees */
.tree {
  display: grid;
  grid-auto-rows: 1fr;
}

.tree.nodes {
  min-height: 356px;
}

.tree.files {
  min-height: 162px;
}

.nodes-well {
  padding-top: 1px;
}

.files-well {
  padding-top: 3px;
}

.tree li {
  display: flex;
  align-items: center;
  gap: 3px;
  padding: 0 3px 0 2px;
}

.tree li > span {
  flex: 1;
}

.tree .arrow {
  margin-right: -2px;
}

.tree .leaf::before {
  content: "";
  width: 5px;
}

.tree .d1 { padding-left: 9px; }
.tree .d2 { padding-left: 16px; }
.tree .d3 { padding-left: 23px; }
.tree .d4 { padding-left: 30px; }
.tree .d5 { padding-left: 37px; }
.tree .d6 { padding-left: 44px; }
.tree .d7 { padding-left: 51px; }

.picked {
  flex: 1;
  align-self: stretch;
  display: flex;
  align-items: center;
  gap: 3px;
  background-color: #34506a;
  border: 1px solid #587286;
  margin-left: -2px;
  padding-left: 1px;
}

.guides {
  position: absolute;
  left: 0;
  top: 0;
  width: 100%;
  height: 100%;
  fill: none;
  stroke: #9da2a7;
  pointer-events: none;
}

.guides .faint {
  stroke: #3c434b;
}

/* Canvas editor */
.center {
  display: flex;
  flex-direction: column;
  background-color: #1d2228;
}

.scene-tab {
  gap: 4px;
}

.center .tabs .tool {
  height: 17px;
}

.toolbar {
  display: flex;
  align-items: center;
  gap: 2px;
  height: 22px;
  padding-left: 2px;
  background-color: #363d48;
}

.sep {
  width: 1px;
  height: 18px;
  margin: 0 1px;
  background-color: #4a515c;
}

.apart {
  margin-left: 7px;
}

.view {
  padding: 0 4px;
}

.anchors {
  align-self: stretch;
  gap: 4px;
  padding: 0 5px;
  background-color: #374855;
  border-bottom: 1px solid #6db5f5;
}

.viewport {
  flex: 1;
  display: grid;
  grid-template-columns: 8px minmax(0, 1fr);
  grid-template-rows: 8px minmax(0, 1fr);
  border: 1px solid #4d7ba0;
  background-color: #1d242c;
}

.corner {
  background-color: #858b94;
}

.ruler {
  width: 100%;
  height: 100%;
}

.ruler text {
  font-size: 5px;
  fill: #a1a5aa;
}

.canvas {
  position: relative;
  overflow: hidden;
  background-color: #4d4d4d;
}

.stage {
  position: absolute;
  left: 11px;
  top: 108px;
  width: 659px;
  height: 370px;
  padding: 36px 124px;
  display: flex;
  flex-direction: column;
  gap: 6px;
  background-color: #c1c2c6;
}

.row {
  display: flex;
  gap: 6px;
}

.col {
  display: flex;
  flex-direction: column;
  gap: 6px;
}

.grow { flex: 1; }
.double { flex: 2; }
.top { height: 220px; }
.bottom { height: 72px; }
.wide { width: 186px; }
.short { height: 54px; }
.upper { height: 143px; }
.narrow { width: 86px; }
.small { width: 58px; }
.third { width: 107px; }

.box {
  border-radius: 3px;
  background-color: #e3e5e8;
  box-shadow: 1px 1px 1px #a9aaae;
}

.box.white { background-color: #fff; }
.box.dark { background-color: #202026; }

.box.selected {
  border: 1px solid #f0a58c;
}

.axis-x, .axis-y, .scroll-x, .scroll-y {
  position: absolute;
}

.axis-x {
  left: 0;
  right: 0;
  top: 107px;
  height: 1px;
  background-color: #a04a74;
}

.axis-y {
  left: 10px;
  top: 0;
  bottom: 0;
  width: 1px;
  background-color: #87962f;
}

.scroll-x {
  left: 33%;
  width: 35%;
  bottom: 1px;
  height: 3px;
  background-color: #8b8b8b;
}

.scroll-y {
  right: 0;
  top: 26%;
  height: 38%;
  width: 3px;
  background-color: #8b8b8b;
}

.zoom {
  position: absolute;
  left: 5px;
  top: 4px;
  display: flex;
  align-items: center;
  gap: 8px;
  color: #c4c4c4;
}

/* Output panel */
.output {
  margin-top: 3px;
  padding-top: 3px;
  display: flex;
  flex-direction: column;
  background-color: #363d48;
}

.log-area {
  display: flex;
}

.log-col {
  flex: 1;
  min-width: 0;
  padding-left: 1px;
}

.log {
  height: 251px;
  padding: 2px 3px;
  overflow: hidden;
  background-color: #20262d;
  font-family: "Liberation Mono", "Noto Sans CJK SC", monospace;
  line-height: 10px;
}

.log span {
  color: #85898e;
}

.log-filter {
  display: block;
  width: 100%;
  height: 16px;
  margin-top: 3px;
  padding: 0 3px;
  background-color: #262b34;
}

.log-tools {
  width: 39px;
  padding: 0 2px;
  display: flex;
  flex-direction: column;
  gap: 3px;
}

.pair {
  display: flex;
  justify-content: space-between;
  padding-bottom: 2px;
  border-bottom: 1px solid #4a515c;
}

.count {
  height: 17px;
  gap: 8px;
  padding-left: 3px;
  background-color: #20262e;
  border-bottom: 1px solid #6db5f5;
  color: #5f96c4;
}

.bottom-tabs {
  display: flex;
  align-items: center;
  gap: 10px;
  height: 21px;
  padding: 0 5px;
}

.bottom-tabs .on {
  color: #6db5f5;
}

.bottom-tabs .alert {
  color: #ead86c;
  gap: 3px;
}

.dot {
  width: 5px;
  height: 5px;
  border-radius: 50%;
  background-color: #ead86c;
}

.version {
  margin-left: auto;
  display: flex;
  align-items: center;
  gap: 5px;
  color: #83888f;
}

/* Inspector */
.res-bar .tool {
  margin-right: 2px;
}

.push {
  margin-left: auto;
}

.object {
  gap: 5px;
  padding-left: 1px;
}

.object span {
  flex: 1;
  text-align: left;
}

.inspector .bar:not(.res-bar) {
  gap: 3px;
  margin-right: -1px;
}

.props {
  flex: 1;
  margin-top: 3px;
  padding: 0 1px;
  background-color: #20262d;
}

.class-name {
  display: flex;
  align-items: center;
  justify-content: center;
  gap: 3px;
  height: 14px;
  font-size: 8px;
  background-color: #3b3f47;
}

.brush {
  color: #83878d;
}

.group {
  width: 100%;
  height: 14px;
  gap: 1px;
  padding: 0 2px 0 1px;
  background-color: #262c33;
  font-weight: bold;
}

.group small {
  margin-left: auto;
  font-size: 8px;
  font-weight: normal;
  color: #72777d;
}

.styles {
  padding-left: 7px;
}

.resource {
  margin-left: 7px;
  padding: 0 1px;
  border: 1px solid #40678a;
  border-top: 0;
  background-color: #2b3640;
}

.resource .group {
  background-color: transparent;
}

.resource > .group {
  padding-left: 2px;
}

.res-head {
  display: flex;
  align-items: center;
  height: 16px;
  margin: 0 -1px;
  background-color: #416c90;
}

.res-name {
  flex: 1;
  display: flex;
  align-items: center;
  gap: 4px;
  padding-left: 4px;
}

input[type="checkbox"] {
  appearance: none;
  width: 8px;
  height: 8px;
  border-radius: 1px;
  background: #70bafa url("data:image/svg+xml,%3Csvg xmlns='http://www.w3.org/2000/svg' viewBox='0 0 8 8'%3E%3Cpath d='M1.500 4l2 2 3-4' fill='none' stroke='white' stroke-width='1.300'/%3E%3C/svg%3E");
}

.res-value {
  width: 116px;
  height: 100%;
  padding: 0 4px;
  background-color: #20262d;
  color: #6f9cc9;
}

.res-value span {
  flex: 1;
}

.preview {
  height: 87px;
  padding: 11px 11px 10px 9px;
  background: repeating-conic-gradient(#60646b 0% 25%, #9b9fa5 0% 50%) 0 0 / 18px 18px;
}

.preview-box {
  height: 100%;
  border-radius: 7px;
  background-color: #fff;
}

.fields {
  display: grid;
  gap: 2px;
  padding-top: 1px;
}

.nested {
  margin-top: -1px;
  padding-top: 0;
}

.prop {
  display: flex;
  align-items: center;
  min-height: 17px;
  padding-left: 5px;
}

.nested .prop {
  padding-left: 12px;
}

.prop.tall {
  align-items: flex-start;
}

.prop > label {
  flex: 1;
  color: #979ca2;
}

.tall > label, .tall > .i {
  margin-top: 3px;
}

.prop > .i, .res-head > .i {
  margin-right: 5px;
}

.value, .vector {
  width: 114px;
}

.nested .value, .nested .vector {
  width: 110px;
}

.value {
  display: flex;
  align-items: center;
  height: 17px;
  padding: 0 3px;
  background-color: #1d2329;
}

.value input[type="text"] {
  width: 12px;
}

.value input[type="text"].digit {
  width: 8px;
}

.value.num {
  padding-left: 9px;
}

.value.num .i {
  margin-left: auto;
}

.value span {
  color: #62686f;
}

.vector {
  display: grid;
  gap: 2px;
  background-color: #1d2329;
}

.axis {
  width: 11px;
  color: #73787e;
}

.enabled {
  margin-left: 5px;
  color: #6f9cc9;
}

.swatch i {
  flex: 1;
  height: 11px;
  background-color: #fff;
}

.swatch.checker i {
  height: 10px;
  background: repeating-conic-gradient(#6e6e6e 0% 25%, #e6e6e6 0% 50%) 0 0 / 10px 10px;
}

.script-row {
  display: flex;
  align-items: center;
  justify-content: space-between;
  height: 16px;
  padding: 0 4px 0 6px;
  color: #777c82;
}

.add-meta {
  width: 90px;
  height: 16px;
  margin: 3px auto 0;
  padding-left: 3px;
  gap: 18px;
  background-color: #262c33;
}

/* Notes over the editor */
.notes {
  position: absolute;
  left: 0;
  top: -2px;
  width: 1154px;
  height: 895px;
  fill: none;
  stroke: #dc3232;
  stroke-width: 2;
  stroke-linecap: round;
  stroke-linejoin: round;
  pointer-events: none;
}

.watermark {
  position: absolute;
  right: 24px;
  bottom: 23px;
  font-family: "Noto Sans CJK SC", sans-serif;
  font-size: 25px;
  line-height: 36px;
  color: #d2d3d5;
  text-shadow: 1px 1px 1px #111;
  white-space: nowrap;
}
```
